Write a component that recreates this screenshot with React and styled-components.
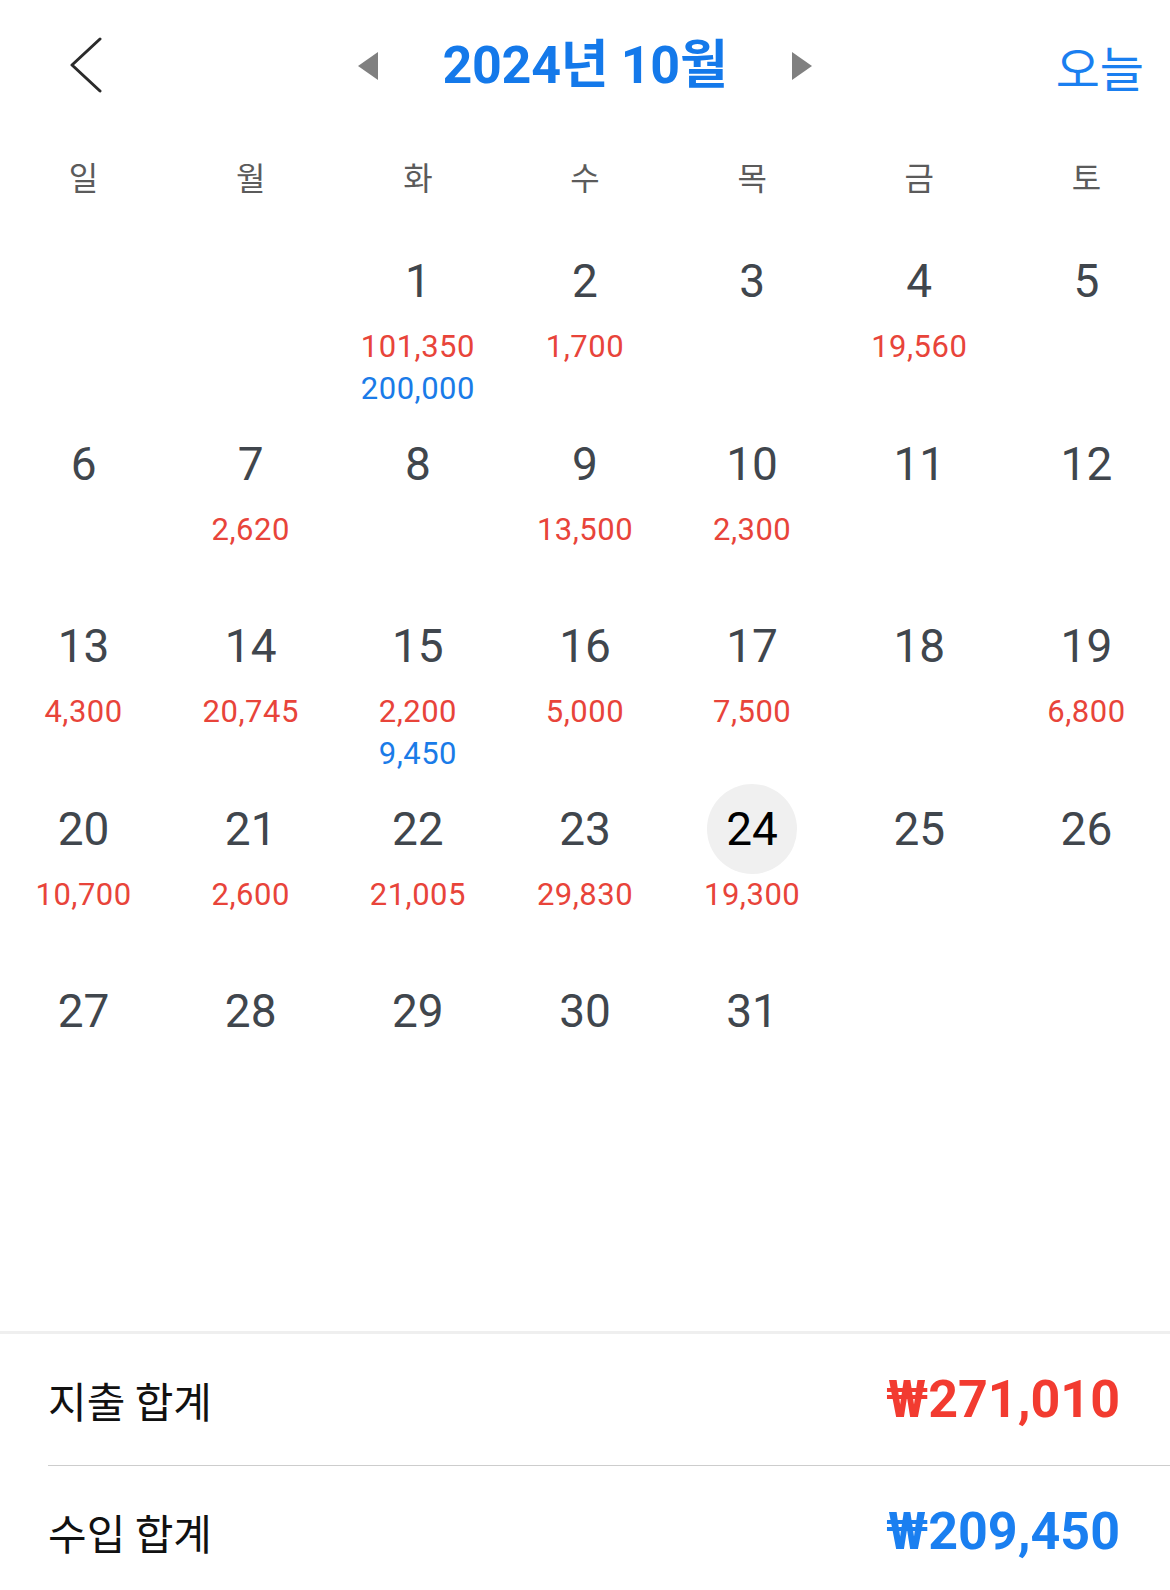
import React from "react";
import styled, { createGlobalStyle } from "styled-components";

const Global = createGlobalStyle`
  html, body { margin: 0; padding: 0; background: #fff; }
  body { font-family: Roboto, "Noto Sans CJK KR", sans-serif; -webkit-font-smoothing: antialiased; }
`;

const Page = styled.div`
  width: 1170px;
  height: 1590px;
  overflow: hidden;
  background: #fff;
`;

const Header = styled.header`
  height: 132px;
  display: grid;
  grid-template-columns: 1fr auto 1fr;
  align-items: center;
`;

const BackButton = styled.button`
  justify-self: start;
  margin-left: 68px;
  margin-top: -2px;
  background: none;
  border: none;
  padding: 0;
  display: flex;
  cursor: pointer;
`;

const MonthNav = styled.div`
  display: flex;
  align-items: center;
  gap: 65px;
`;

const Arrow = styled.button`
  background: none;
  border: none;
  padding: 0;
  display: flex;
  cursor: pointer;
`;

const Title = styled.h1`
  margin: 0;
  font-family: Roboto, "Noto Sans CJK KR", sans-serif;
  font-weight: 700;
  font-size: 52px;
  line-height: 1;
  color: #1479ea;
  letter-spacing: -0.3px;
`;

const TodayButton = styled.button`
  justify-self: end;
  margin-right: 26px;
  background: none;
  border: none;
  padding: 0;
  font-family: "Noto Sans CJK KR", sans-serif;
  font-size: 48px;
  font-weight: 400;
  color: #1a7ff0;
  line-height: 1;
  cursor: pointer;
`;

const WeekRow = styled.div`
  height: 88px;
  display: grid;
  grid-template-columns: repeat(7, 1fr);
  align-items: center;
  margin-bottom: 16px;
`;

const WeekLabel = styled.div`
  text-align: center;
  font-family: "Noto Sans CJK KR", sans-serif;
  font-size: 32px;
  color: #5b5b5b;
`;

const Grid = styled.div`
  display: grid;
  grid-template-columns: repeat(7, 1fr);
  grid-auto-rows: 182.5px;
`;

const Cell = styled.div`
  display: flex;
  flex-direction: column;
  align-items: center;
`;

const DayCircle = styled.div`
  width: 90px;
  height: 90px;
  border-radius: 50%;
  display: flex;
  align-items: center;
  justify-content: center;
  background: ${(p) => (p.$today ? "#f0f0f0" : "transparent")};
  font-size: 46px;
  font-weight: 400;
  color: ${(p) => (p.$today ? "#000" : "#40464d")};
  line-height: 1;
`;

const Amount = styled.div`
  font-size: 31px;
  line-height: 41.5px;
  letter-spacing: 0.5px;
  color: ${(p) => (p.$income ? "#1a7be8" : "#e8443a")};
  &:first-of-type { margin-top: -2px; }
`;

const Summary = styled.section`
  border-top: 3px solid #efefef;
`;

const SummaryRow = styled.div`
  height: 131px;
  margin-left: 48px;
  padding-right: 50px;
  display: flex;
  align-items: center;
  justify-content: space-between;
  border-bottom: ${(p) => (p.$divider ? "1.5px solid #cdcdcd" : "none")};
`;

const SummaryLabel = styled.span`
  font-family: "Noto Sans CJK KR", sans-serif;
  font-size: 42px;
  color: #111;
`;

const SummaryValue = styled.span`
  font-family: Roboto, "Noto Sans CJK KR", sans-serif;
  font-size: 52px;
  font-weight: 700;
  color: ${(p) => (p.$income ? "#1a7ff0" : "#f23b30")};
`;

const weekdays = ["일", "월", "화", "수", "목", "금", "토"];

const data = {
  1: { exp: "101,350", inc: "200,000" },
  2: { exp: "1,700" },
  4: { exp: "19,560" },
  7: { exp: "2,620" },
  9: { exp: "13,500" },
  10: { exp: "2,300" },
  13: { exp: "4,300" },
  14: { exp: "20,745" },
  15: { exp: "2,200", inc: "9,450" },
  16: { exp: "5,000" },
  17: { exp: "7,500" },
  19: { exp: "6,800" },
  20: { exp: "10,700" },
  21: { exp: "2,600" },
  22: { exp: "21,005" },
  23: { exp: "29,830" },
  24: { exp: "19,300" },
};

const cells = [];
for (let i = 0; i < 2; i++) cells.push(null);
for (let d = 1; d <= 31; d++) cells.push(d);
while (cells.length < 42) cells.push(null);

const Chevron = () => (
  <svg width="36" height="56" viewBox="0 0 36 56" fill="none">
    <polyline
      points="32,2 4,28 32,54"
      stroke="#2b2b2b"
      strokeWidth="3"
      strokeLinecap="round"
      strokeLinejoin="round"
    />
  </svg>
);

const Tri = ({ dir }) => (
  <svg width="20" height="28" viewBox="0 0 20 28">
    {dir === "left" ? (
      <polygon points="20,0 0,14 20,28" fill="#808080" />
    ) : (
      <polygon points="0,0 20,14 0,28" fill="#808080" />
    )}
  </svg>
);

export default function App() {
  return (
    <Page>
      <Global />
      <Header>
        <BackButton aria-label="뒤로">
          <Chevron />
        </BackButton>
        <MonthNav>
          <Arrow aria-label="이전 달">
            <Tri dir="left" />
          </Arrow>
          <Title>2024년 10월</Title>
          <Arrow aria-label="다음 달">
            <Tri dir="right" />
          </Arrow>
        </MonthNav>
        <TodayButton>오늘</TodayButton>
      </Header>
      <WeekRow>
        {weekdays.map((w) => (
          <WeekLabel key={w}>{w}</WeekLabel>
        ))}
      </WeekRow>
      <Grid>
        {cells.map((d, i) => (
          <Cell key={i}>
            {d && (
              <>
                <DayCircle $today={d === 24}>{d}</DayCircle>
                {data[d]?.exp && <Amount>{data[d].exp}</Amount>}
                {data[d]?.inc && <Amount $income>{data[d].inc}</Amount>}
              </>
            )}
          </Cell>
        ))}
      </Grid>
      <Summary>
        <SummaryRow $divider>
          <SummaryLabel>지출 합계</SummaryLabel>
          <SummaryValue>₩271,010</SummaryValue>
        </SummaryRow>
        <SummaryRow>
          <SummaryLabel>수입 합계</SummaryLabel>
          <SummaryValue $income>₩209,450</SummaryValue>
        </SummaryRow>
      </Summary>
    </Page>
  );
}
